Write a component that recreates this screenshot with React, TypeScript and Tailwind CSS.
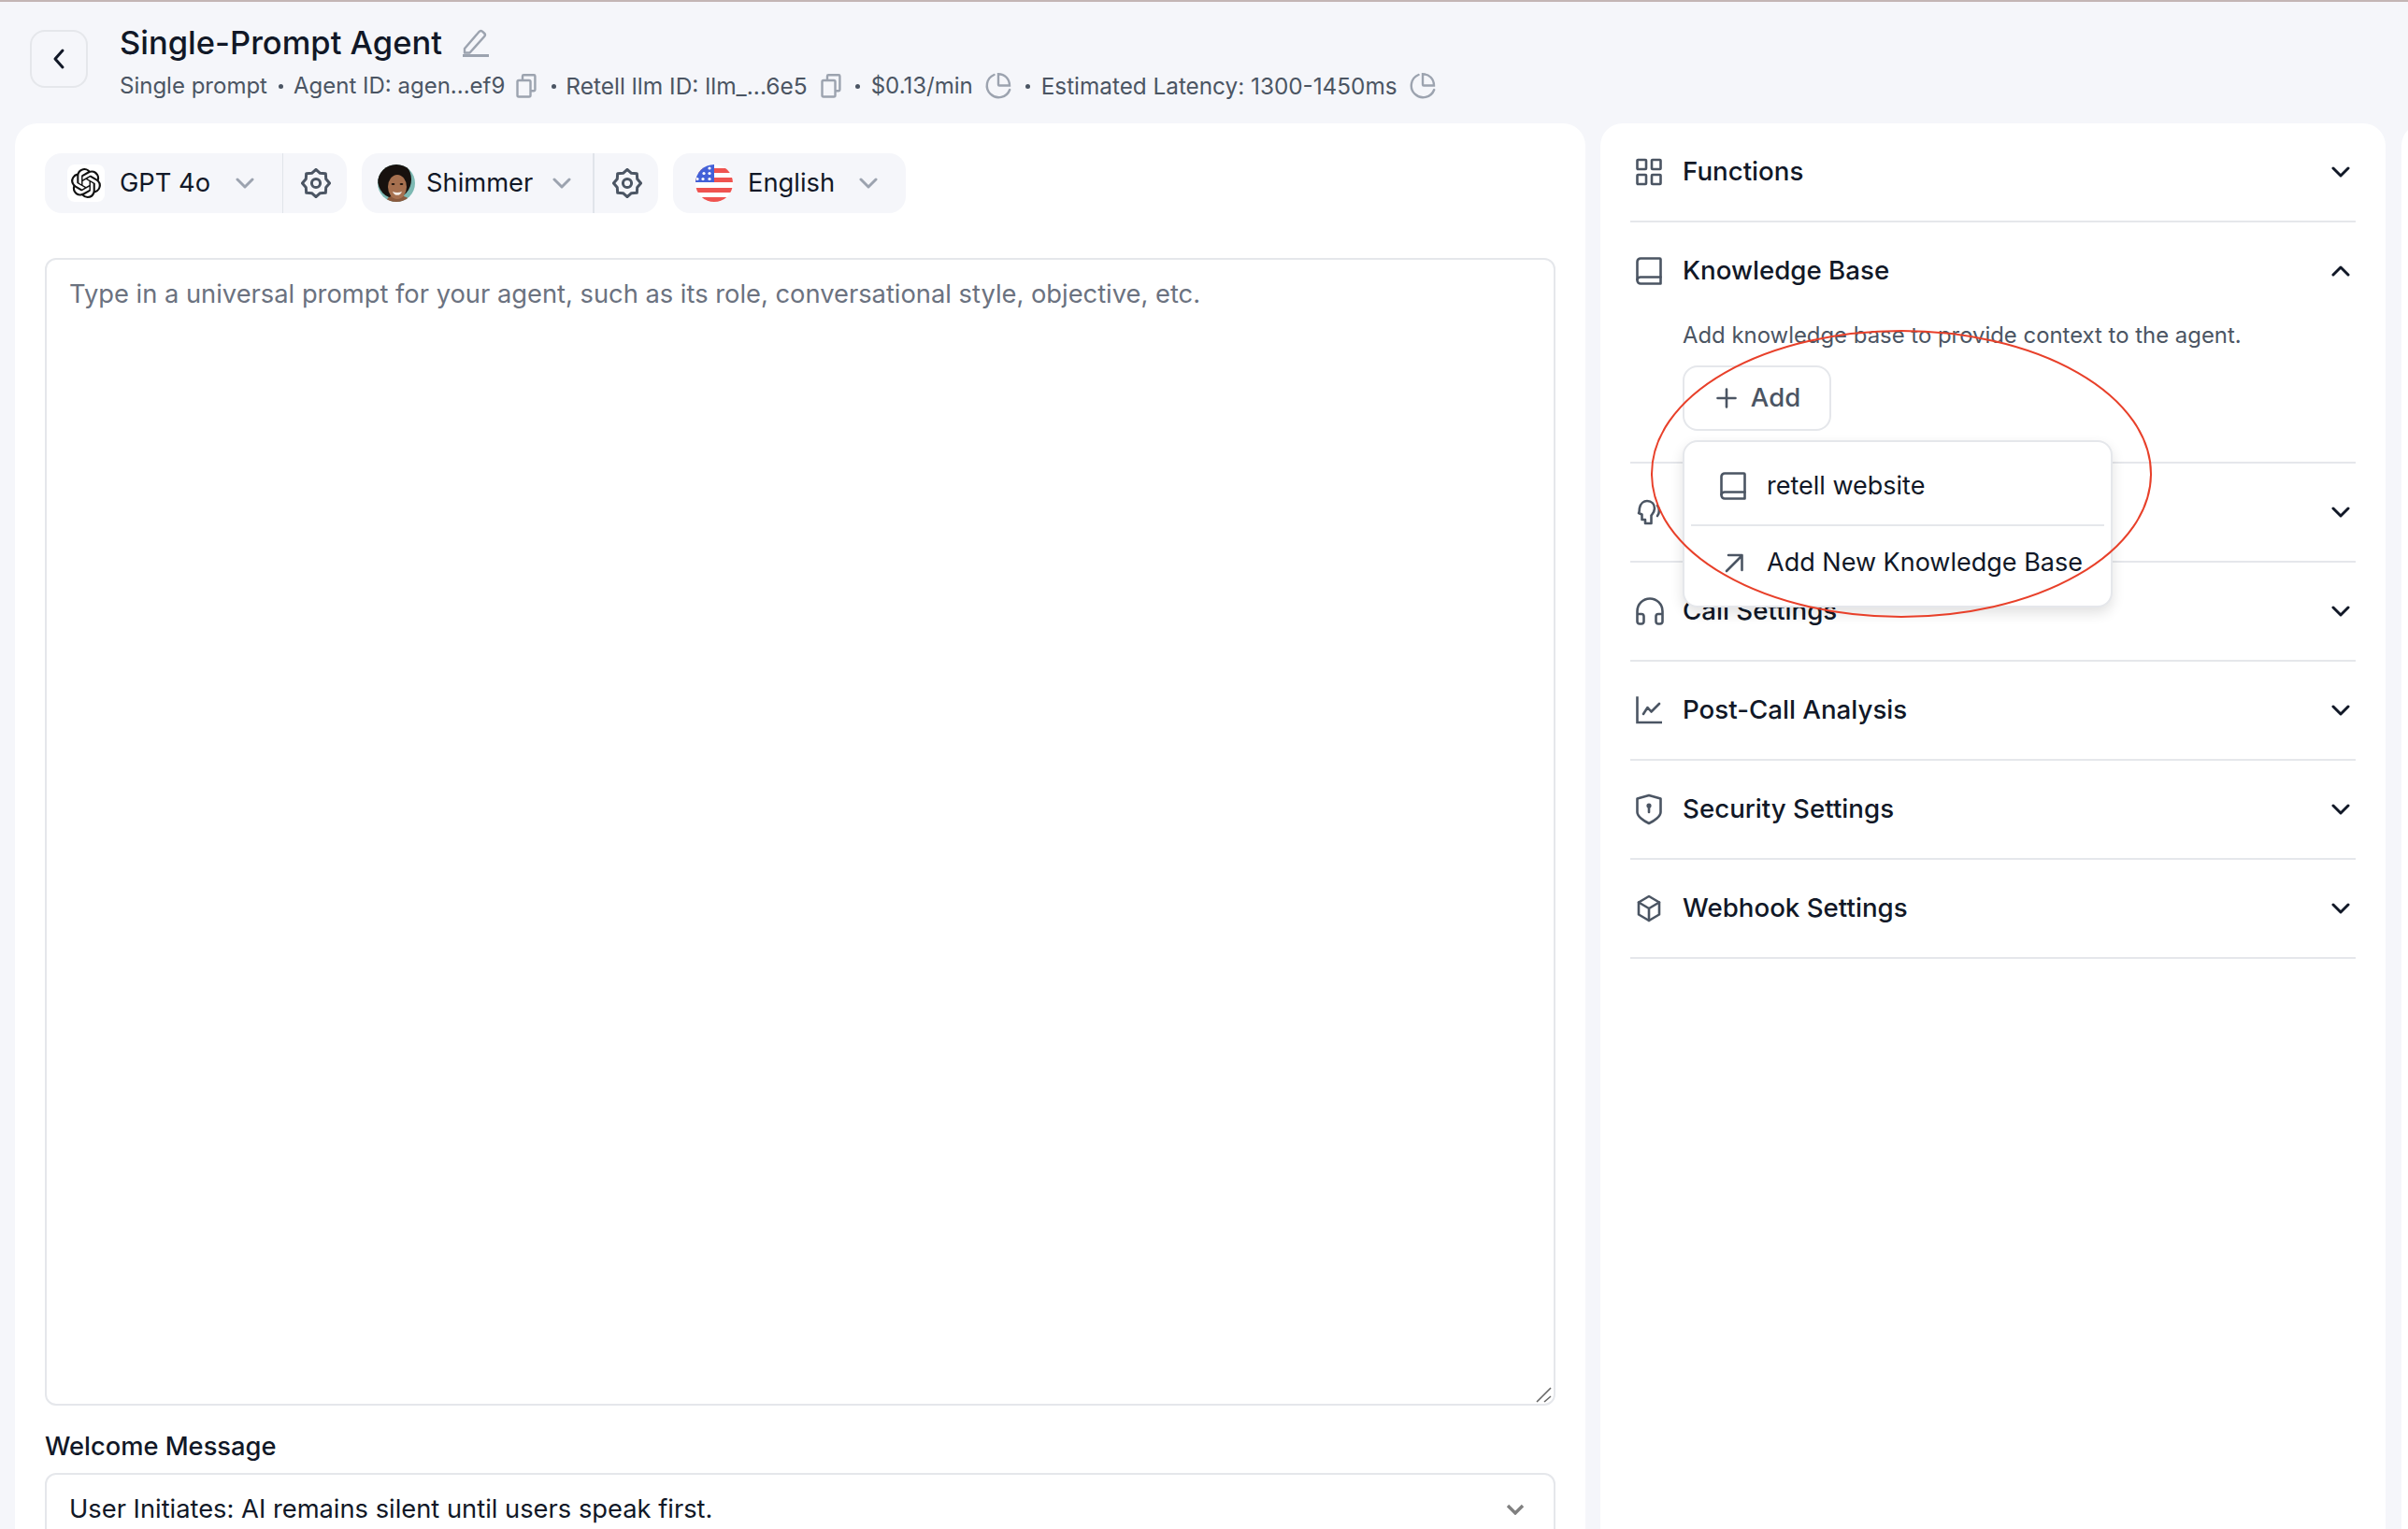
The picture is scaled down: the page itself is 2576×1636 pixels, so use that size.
import type { ReactNode } from "react";
import { SiOpenai } from "react-icons/si";

type RowProps = {
  icon: ReactNode;
  label: string;
  open?: boolean;
  children?: ReactNode;
};

const starPoints = Array.from({ length: 16 }, (_, i) => {
  const radius = i % 2 === 0 ? 14.6 : 11.6;
  const angle = (Math.PI / 8) * i - Math.PI / 2;
  return `${(16 + radius * Math.cos(angle)).toFixed(2)},${(16 + radius * Math.sin(angle)).toFixed(2)}`;
}).join(" ");

function Gear() {
  return (
    <svg width="32" height="32" viewBox="0 0 32 32" fill="none" stroke="#4b5563" strokeWidth="3" strokeLinejoin="round">
      <polygon points={starPoints} />
      <circle cx="16" cy="16" r="4.6" />
    </svg>
  );
}

function Chevron({ up = false, light = false }: { up?: boolean; light?: boolean }) {
  return (
    <svg width="20" height="12" viewBox="0 0 20 12" fill="none" stroke={light ? "#9ca3af" : "#111827"} strokeWidth="3" strokeLinecap="round" strokeLinejoin="round">
      <path d={up ? "M2 10 10 2l8 8" : "M2 2l8 8 8-8"} />
    </svg>
  );
}

function Copy() {
  return (
    <svg width="22" height="26" viewBox="0 0 22 26" fill="none" stroke="#9ca3af" strokeWidth="2.4" className="shrink-0">
      <rect x="1.5" y="7" width="14" height="17.5" rx="1.5" />
      <path d="M7 7V2.5A1.2 1.2 0 0 1 8.2 1.3h11a1.2 1.2 0 0 1 1.2 1.2V17a1.2 1.2 0 0 1-1.2 1.2h-3.7" />
    </svg>
  );
}

function Pie() {
  return (
    <svg width="30" height="30" viewBox="0 0 30 30" fill="none" stroke="#9ca3af" strokeWidth="2.4" strokeLinecap="round" className="shrink-0">
      <path d="M10.5 3A12.6 12.6 0 1 0 27.2 19" />
      <path d="M15 2.2v11.3a1 1 0 0 0 1 1h11c0-7-5-12.300-12-12.300z" />
    </svg>
  );
}

function Dot() {
  return <span className="h-[5px] w-[5px] shrink-0 rounded-full bg-[#4b5563]" />;
}

function Glyph({ children, w = 28, h = 30 }: { children: ReactNode; w?: number; h?: number }) {
  return (
    <svg width={w} height={h} viewBox={`0 0 ${w} ${h}`} fill="none" stroke="#4b5563" strokeWidth="2.6" strokeLinecap="round" strokeLinejoin="round" className="shrink-0">
      {children}
    </svg>
  );
}

const BookIcon = () => (
  <Glyph>
    <path d="M5 1.500h20.500a1 1 0 0 1 1 1V28.500H5a3.500 3.500 0 0 1-3.500-3.500V5A3.500 3.500 0 0 1 5 1.500z" />
    <path d="M1.500 24a3.500 3.500 0 0 1 3.500-2.500h21.500" />
  </Glyph>
);

const rows: RowProps[] = [
  {
    label: "Functions",
    icon: (
      <Glyph>
        <rect x="1.500" y="2" width="9.500" height="10" rx="0.8" />
        <rect x="17" y="2" width="9.500" height="10" rx="0.8" />
        <rect x="1.500" y="18" width="9.500" height="10" rx="0.8" />
        <rect x="17" y="18" width="9.500" height="10" rx="0.8" />
      </Glyph>
    ),
  },
  { label: "Knowledge Base", icon: <BookIcon />, open: true },
  {
    // this row's label sits fully behind the dropdown in the screenshot
    label: "",
    icon: (
      <Glyph>
        <path d="M10 27v-4H6.500v-5.500L3 16c1-1 .5-3 1-5.500C5 5.500 8.500 3 12 3c5 0 8 3.500 8 8 0 3.500-2 5.500-3.500 7.500V27z" />
        <path d="M23 8c2.500 3 2.500 8 0 11" />
      </Glyph>
    ),
  },
  {
    label: "Call Settings",
    icon: (
      <Glyph w={30}>
        <path d="M1.500 18h4.500a2.500 2.500 0 0 1 2.500 2.500v5.500a2.500 2.500 0 0 1-2.500 2.500H4a2.500 2.500 0 0 1-2.500-2.500V15a13.500 13.500 0 0 1 27 0v11a2.500 2.500 0 0 1-2.500 2.500h-2a2.500 2.500 0 0 1-2.500-2.500v-5.500A2.500 2.500 0 0 1 24 18h4.500" />
      </Glyph>
    ),
  },
  {
    label: "Post-Call Analysis",
    icon: (
      <Glyph>
        <path d="M1.500 1.500V28h25.500" strokeLinecap="square" strokeLinejoin="miter" />
        <path d="M8 19l4.500-7 4 4.500L25 8" />
      </Glyph>
    ),
  },
  {
    label: "Security Settings",
    icon: (
      <Glyph h={34}>
        <path d="M14 2l12.500 3.500v14.500c0 4.500-7 9.500-12.500 12-5.500-2.500-12.500-7.500-12.500-12V5.500z" />
        <circle cx="14" cy="13" r="1.300" fill="#4b5563" />
        <path d="M14 14v6" />
      </Glyph>
    ),
  },
  {
    label: "Webhook Settings",
    icon: (
      <Glyph>
        <path d="M14 2l11 6.500v13L14 28 3 21.500v-13z" />
        <path d="M3 8.500l11 6.500 11-6.500M14 15v13" />
      </Glyph>
    ),
  },
];

function Row({ icon, label, open = false, children }: RowProps) {
  return (
    <div className="border-b-2 border-[#e5e7eb]">
      <div className="flex h-[104px] items-center">
        <div className="flex w-[56px] justify-start pl-[6px]">{icon}</div>
        <span className="flex-1 text-[27.700px] font-medium text-[#111827]">{label}</span>
        <span className="mr-[6px] flex">
          <Chevron up={open} />
        </span>
      </div>
      {children}
    </div>
  );
}

function Avatar() {
  return (
    <svg width="40" height="40" viewBox="0 0 40 40" className="shrink-0">
      <defs>
        <clipPath id="avatar-clip">
          <circle cx="20" cy="20" r="20" />
        </clipPath>
      </defs>
      <g clipPath="url(#avatar-clip)">
        <rect width="40" height="40" fill="#7db9b3" />
        <ellipse cx="18" cy="16" rx="18" ry="20" fill="#17110e" />
        <path d="M9 40c1-5 5-7 12-7s12 2 14 7z" fill="#8a5a3e" />
        <ellipse cx="21" cy="24" rx="10" ry="13" fill="#a6704f" />
        <ellipse cx="16.500" cy="21" rx="1.900" ry="1.100" fill="#1e120c" />
        <ellipse cx="25.500" cy="21" rx="1.900" ry="1.100" fill="#1e120c" />
        <path d="M16 29c3 1.200 7 1.200 10 0-1 3-3 3.800-5 3.800s-4-.8-5-3.800z" fill="#f4ece6" />
      </g>
    </svg>
  );
}

function Flag() {
  return (
    <svg width="40" height="40" viewBox="0 0 40 40" className="shrink-0">
      <defs>
        <clipPath id="flag-clip">
          <circle cx="20" cy="20" r="20" />
        </clipPath>
      </defs>
      <g clipPath="url(#flag-clip)">
        <rect width="40" height="40" fill="#ffffff" />
        <rect y="4" width="40" height="5" fill="#ef5350" />
        <rect y="14" width="40" height="5" fill="#ef5350" />
        <rect y="25" width="40" height="5" fill="#ef5350" />
        <rect y="35" width="40" height="5" fill="#ef5350" />
        <rect width="20" height="19" fill="#4361d8" />
        <g fill="#ffffff">
          <circle cx="15" cy="4" r="1.600" />
          <circle cx="9" cy="9.500" r="1.600" />
          <circle cx="15" cy="9.500" r="1.600" />
          <circle cx="8" cy="15.500" r="1.600" />
          <circle cx="15" cy="15.500" r="1.600" />
          <circle cx="2" cy="15.500" r="1.600" />
        </g>
      </g>
    </svg>
  );
}

export default function App() {
  return (
    <div className="h-[1636px] w-[2576px] overflow-hidden border-t-2 border-[#c4b6b5] bg-[#f5f6fa] font-[Inter,sans-serif]">
      <header className="flex h-[130px] items-start pl-[32px] pt-[30px]">
        <button className="flex h-[62px] w-[62px] items-center justify-center rounded-2xl border-2 border-[#e5e7eb]">
          <svg width="16" height="24" viewBox="0 0 16 24" fill="none" stroke="#111827" strokeWidth="3" strokeLinecap="round" strokeLinejoin="round">
            <path d="M12 3 4 12l8 9" />
          </svg>
        </button>
        <div className="ml-[34px]">
          <div className="-mt-[2px] flex h-[32px] items-center">
            <h1 className="text-[34.5px] leading-[32px] font-medium text-[#111827]">Single-Prompt Agent</h1>
            <svg width="30" height="30" viewBox="0 0 30 30" fill="none" stroke="#9ca3af" strokeWidth="2.400" strokeLinejoin="round" className="ml-[21px]">
              <path d="M3 21 18.500 3a2.500 2.500 0 0 1 3.500-.3l2 1.800a2.500 2.500 0 0 1 .2 3.500L8.500 25.500H3z" />
              <path d="M1 28.500h28" strokeWidth="3" />
            </svg>
          </div>
          <div className="mt-[15px] flex h-[30px] items-center text-[24px] whitespace-nowrap text-[#4b5563]">
            <span>Single prompt</span>
            <span className="ml-[12px] mr-[11px] flex"><Dot /></span>
            <span>Agent ID: agen...ef9</span>
            <span className="ml-[12px]"><Copy /></span>
            <span className="ml-[16px] mr-[10px] flex"><Dot /></span>
            <span className="text-[24.500px]">Retell llm ID: llm_...6e5</span>
            <span className="ml-[14px]"><Copy /></span>
            <span className="ml-[15px] mr-[12px] flex"><Dot /></span>
            <span>$0.13/min</span>
            <span className="ml-[12px]"><Pie /></span>
            <span className="ml-[14px] mr-[12px] flex"><Dot /></span>
            <span className="text-[24.300px]">Estimated Latency: 1300-1450ms</span>
            <span className="ml-[12px]"><Pie /></span>
          </div>
        </div>
      </header>

      <main className="flex h-[1504px] pl-[16px]">
        <section className="h-[1600px] w-[1680px] shrink-0 rounded-3xl bg-white px-[32px] pt-[32px]">
          <div className="flex h-[64px] gap-[16px] text-[27.300px] text-[#111827]">
            <div className="flex w-[323px] rounded-[18px] bg-[#f5f6fa]">
              <div className="flex w-[255px] items-center border-r border-[#e1e4ea] pl-[24px]">
                <span className="flex h-[40px] w-[40px] items-center justify-center rounded-lg bg-white">
                  <SiOpenai size={32} color="#111111" />
                </span>
                <span className="ml-[16px]">GPT 4o</span>
                <span className="ml-auto mr-[30px] flex"><Chevron light /></span>
              </div>
              <div className="flex flex-1 items-center justify-center pl-[2px]"><Gear /></div>
            </div>
            <div className="flex w-[317px] rounded-[18px] bg-[#f5f6fa]">
              <div className="flex w-[249px] items-center border-r-2 border-[#e1e4ea] pl-[17px]">
                <Avatar />
                <span className="ml-[12px]">Shimmer</span>
                <span className="ml-auto mr-[23px] flex"><Chevron light /></span>
              </div>
              <div className="flex flex-1 items-center justify-center pl-[2px]"><Gear /></div>
            </div>
            <div className="flex w-[249px] items-center rounded-[18px] bg-[#f5f6fa] pl-[24px]">
              <Flag />
              <span className="ml-[16px]">English</span>
              <span className="ml-auto mr-[30px] flex"><Chevron light /></span>
            </div>
          </div>

          <div className="relative mt-[48px] h-[1228px]">
            <textarea
              className="h-full w-full resize-none rounded-xl border-2 border-[#e5e7eb] px-[24px] py-[17px] text-[27.300px] leading-[40px] outline-none placeholder:text-[#6b7280]"
              placeholder="Type in a universal prompt for your agent, such as its role, conversational style, objective, etc."
            />
            <svg width="18" height="18" viewBox="0 0 18 18" fill="none" stroke="#666666" strokeWidth="1.600" className="absolute bottom-[3px] right-[3px]">
              <path d="M1 17 16 2M9 17l7-6" />
            </svg>
          </div>

          <div className="mt-[27px] text-[27.300px] leading-[34px] font-medium text-[#111827]">Welcome Message</div>
          <div className="mt-[11px] flex h-[78px] items-center justify-between rounded-t-xl border-2 border-[#e5e7eb] pl-[24px] pr-[31px] text-[27.300px] text-[#111827]">
            <span>User Initiates: AI remains silent until users speak first.</span>
            <svg width="20" height="12" viewBox="0 0 20 12" fill="none" stroke="#808080" strokeWidth="3.400">
              <path d="M2 2l8 8 8-8" />
            </svg>
          </div>
        </section>

        <section className="relative ml-[16px] h-[1600px] w-[840px] shrink-0 rounded-3xl bg-white px-[32px]">
          {rows.map((row) => (
            <Row key={row.label} icon={row.icon} label={row.label} open={row.open}>
              {row.open && (
                <div className="pb-[33px] pl-[56px]">
                  <p className="pt-[1px] text-[23.900px] leading-[32px] text-[#4b5563]">
                    Add knowledge base to provide context to the agent.
                  </p>
                  <div className="relative mt-[16px]">
                    <button className="flex h-[70px] w-[159px] items-center justify-center gap-[15px] rounded-2xl border-2 border-[#e5e7eb] bg-white pl-[3px] text-[27.500px] font-medium text-[#4b5563]">
                      <svg width="22" height="22" viewBox="0 0 22 22" fill="none" stroke="#4b5563" strokeWidth="2.600" strokeLinecap="round">
                        <path d="M11 1.500v19M1.500 11h19" />
                      </svg>
                      Add
                    </button>
                    <div className="absolute left-0 top-[80px] z-10 h-[179px] w-[460px] rounded-2xl border-2 border-[#e5e7eb] bg-white pt-[4px] text-[27px] text-[#111827] shadow-[0_6px_14px_rgba(0,0,0,0.12)]">
                      <div className="flex h-[84px] items-center gap-[22px] pl-[38px] pt-[2px]">
                        <BookIcon />
                        <span>retell website</span>
                      </div>
                      <div className="mx-[7px] h-[2px] bg-[#e5e7eb]" />
                      <div className="flex h-[78px] items-center gap-[22px] pl-[38px]">
                        <Glyph>
                          <path d="M7 24 23 8M9 7h14.500v16" />
                        </Glyph>
                        <span className="whitespace-nowrap">Add New Knowledge Base</span>
                      </div>
                    </div>
                  </div>
                </div>
              )}
            </Row>
          ))}
          <svg width="540" height="310" viewBox="0 0 540 310" fill="none" className="absolute left-[52px] top-[220px] z-20">
            <ellipse cx="270" cy="155" rx="267" ry="153" stroke="#e8402a" strokeWidth="2" />
          </svg>
        </section>

        <section className="ml-[17px] h-[1600px] w-[100px] shrink-0 rounded-3xl bg-white" />
      </main>
    </div>
  );
}
